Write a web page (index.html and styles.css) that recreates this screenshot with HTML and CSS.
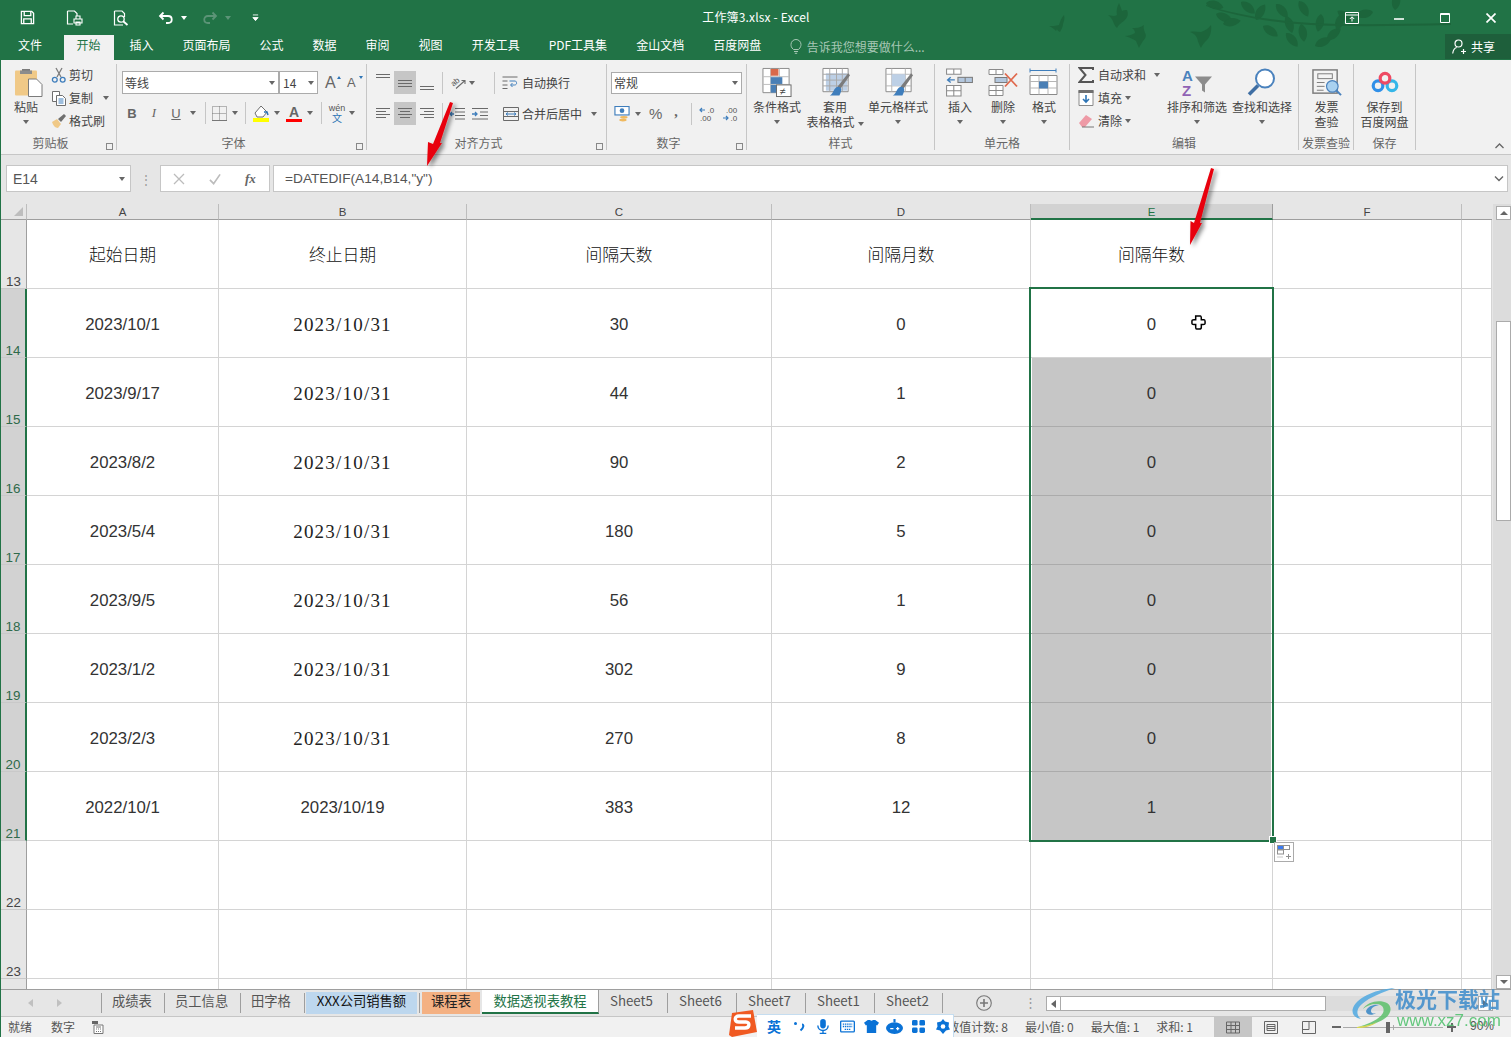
FILE: index.html
```html
<!DOCTYPE html>
<html lang="zh-CN">
<head>
<meta charset="utf-8">
<title>工作簿3.xlsx - Excel</title>
<link rel="stylesheet" href="styles.css">
</head>
<body>
<div class="app">

<header class="titlebar">
  <div class="qat">
    <svg class="qi" viewBox="0 0 16 16"><path d="M1.500 1.500h11l2 2v11h-13z" fill="none" stroke="#fff" stroke-width="1.400"/><path d="M4.500 2v4h7V2M4 14.500V9.500h8v5" fill="none" stroke="#fff" stroke-width="1.400"/></svg>
    <svg class="qi q2" viewBox="0 0 17 16"><path d="M1.500 1h7l2.500 2.500V8M1.500 1v13H7" fill="none" stroke="#fff" stroke-width="1.200"/><path d="M8 9h8v4H8zM10 9V6h4v3M10 12h4v3h-4z" fill="#217346" stroke="#fff" stroke-width="1.100"/></svg>
    <svg class="qi q3" viewBox="0 0 17 16"><path d="M1.500 1h7.500l2.500 2.500V7M1.500 1v14H10" fill="none" stroke="#fff" stroke-width="1.200"/><circle cx="8" cy="9" r="3.200" fill="none" stroke="#fff" stroke-width="1.300"/><path d="M10.500 11.500l4 3.500" stroke="#fff" stroke-width="1.800"/></svg>
    <svg class="qi q4" viewBox="0 0 16 14"><path d="M5.500 1.500L2 5l3.500 3.500" fill="none" stroke="#fff" stroke-width="1.800"/><path d="M2.500 5H10c5 0 5 7 0 7H8" fill="none" stroke="#fff" stroke-width="1.800"/></svg>
    <i class="caret white"></i>
    <svg class="qi q5" viewBox="0 0 16 14"><path d="M10.500 1.500L14 5l-3.500 3.500" fill="none" stroke="#5c9477" stroke-width="1.800"/><path d="M13.500 5H6c-5 0-5 7 0 7h2" fill="none" stroke="#5c9477" stroke-width="1.800"/></svg>
    <i class="caret dim"></i>
    <svg class="qi q6" viewBox="0 0 8 9"><path d="M1 1h6M1 4h6l-3 3.500L1 4" fill="#fff" stroke="#fff" stroke-width="1"/></svg>
  </div>
  <div class="doc-title">工作簿3.xlsx - Excel</div>
  <svg class="leaves" viewBox="0 0 460 60">
    <defs><path id="lf" d="M0 0C4-6 13-6 18 0 13 5 4 5 0 0z"/></defs>
    <g fill="#1c653b">
      <path d="M63 15c-3 3-4 7-5 10-3 1-7 1-10 1 3 1 5 3 7 5l1-2c0 1 1 2 3 3 1-2 3-5 3-8 1-3 2-6 1-9z"/>
      <path d="M118 3c-2 4-3 8-2 12-3 2-7 0-9 0 4 3 5 6 6 9 1 2 2 3 3 4 1-3 4-5 7-7 3-3 5-6 3-11-2 0-4 0-5 1-1-3-2-6-3-8z"/>
      <path d="M143 25c-4 3-8 3-12 3 2 1 3 3 3 5-3 2-7 3-10 3 4 1 8 3 11 5 1 2 2 5 3 7 1-3 3-5 4-7 2-2 4-5 2-8-1-3-2-6-1-8z"/>
      <path d="M210 25c-3 4-7 6-10 7-4 0-7-1-11 0 3 1 6 3 7 6 1 3 2 7 4 10 1-3 3-5 6-8 3-3 5-9 4-15z"/>
      <use href="#lf" transform="translate(205 3) rotate(15)"/>
      <use href="#lf" transform="translate(215 14) rotate(25)"/>
      <use href="#lf" transform="translate(222 24) rotate(-10)"/>
      <use href="#lf" transform="translate(240 2) rotate(40)"/>
      <use href="#lf" transform="translate(255 20) rotate(-60)"/>
      <use href="#lf" transform="translate(275 4) rotate(50)"/>
      <use href="#lf" transform="translate(285 16) rotate(70)"/>
      <use href="#lf" transform="translate(262 26) rotate(35)"/>
      <use href="#lf" transform="translate(300 24) rotate(80)"/>
      <use href="#lf" transform="translate(298 1) rotate(60)"/>
      <use href="#lf" transform="translate(320 14) rotate(100)"/>
      <use href="#lf" transform="translate(314 46) rotate(-25)"/>
      <use href="#lf" transform="translate(326 40) rotate(-40)"/>
      <use href="#lf" transform="translate(336 30) rotate(-70)"/>
      <use href="#lf" transform="translate(352 20) rotate(-150)"/>
      <use href="#lf" transform="translate(372 12) rotate(170)"/>
      <use href="#lf" transform="translate(394 10) rotate(-80)"/>
      <use href="#lf" transform="translate(285 33) rotate(50)"/>
      <path d="M205 5c30 10 70 16 105 18 40 2 90 1 140 0v2c-50 1-100 2-140 0-35-2-75-8-105-19z"/>
    </g>
  </svg>
  <div class="winctl">
    <svg class="w1" viewBox="0 0 14 12"><path d="M.5.500h13v11H.5zM.5 3h13" fill="none" stroke="#fff" stroke-width="1"/><path d="M7 9.500V5M4.800 7L7 4.800 9.200 7" fill="none" stroke="#fff"/></svg>
    <svg class="w2" viewBox="0 0 10 2"><path d="M0 1h10" stroke="#fff" stroke-width="1.600"/></svg>
    <svg class="w3" viewBox="0 0 10 10"><path d="M.5.500h9v9h-9zM.5 1.500h9" fill="none" stroke="#fff" stroke-width="1"/></svg>
    <svg class="w4" viewBox="0 0 10 10"><path d="M.5.500l9 9M9.500.500l-9 9" stroke="#fff" stroke-width="1.700"/></svg>
  </div>
</header>

<nav class="tabsrow">
  <span class="tab first">文件</span>
  <span class="tab on">开始</span>
  <span class="tab">插入</span>
  <span class="tab">页面布局</span>
  <span class="tab">公式</span>
  <span class="tab">数据</span>
  <span class="tab">审阅</span>
  <span class="tab">视图</span>
  <span class="tab">开发工具</span>
  <span class="tab">PDF工具集</span>
  <span class="tab">金山文档</span>
  <span class="tab">百度网盘</span>
  <span class="tell">
    <svg viewBox="0 0 12 15"><path d="M3.500 10.500C1 8.500 1 6.500 1 5.500a5 5 0 0 1 10 0c0 1-.3 3-2.500 5zM4 12.500h4M4.800 14.300h2.400" fill="none" stroke="#a7c7b5" stroke-width="1"/></svg>
    告诉我您想要做什么...
  </span>
  <span class="share">
    <svg viewBox="0 0 14 15"><circle cx="6.500" cy="4.500" r="3.500" fill="none" stroke="#fff" stroke-width="1.200"/><path d="M.7 14.500c.5-3.500 2-5.500 4-6M9 12.500h5M11.500 10v5" fill="none" stroke="#fff" stroke-width="1.200"/></svg>
    共享
  </span>
</nav>

<section class="ribbon">

  <div class="group g-clip">
    <div class="gbody clip-body">
      <div class="bigbtn paste">
        <svg class="ic30" viewBox="0 0 30 30"><rect x="1" y="3" width="22" height="25" rx="1" fill="#f0c987"/><path d="M8 4h8V1.500h-8z" fill="#7b7b7b"/><rect x="6" y="3" width="12" height="3.500" fill="#8c8c8c"/><path d="M14.500 11.500h8l5.500 5.500v12h-13.500z" fill="#fff" stroke="#7b7b7b"/></svg>
        <span class="lb">粘贴</span><i class="caret"></i>
      </div>
      <div class="stack">
        <div class="srow"><svg class="ic16" viewBox="0 0 16 16"><path d="M5 1l5 9M11 1L6 10" stroke="#7d7d7d" stroke-width="1.300" fill="none"/><circle cx="3.800" cy="12.700" r="2.400" fill="none" stroke="#3f7ebc" stroke-width="1.300"/><circle cx="11.700" cy="12.700" r="2.400" fill="none" stroke="#3f7ebc" stroke-width="1.300"/></svg><span>剪切</span></div>
        <div class="srow"><svg class="ic16" viewBox="0 0 16 16"><path d="M1.500 1.500h7v10h-7z" fill="#fff" stroke="#6f6f6f"/><path d="M5.500 5.500h6l3 3v7h-9z" fill="#fff" stroke="#6f6f6f"/><path d="M7.500 9h5M7.500 11h5M7.500 13h5" stroke="#3f7ebc"/></svg><span>复制</span><i class="caret c-copy"></i></div>
        <div class="srow"><svg class="ic16" viewBox="0 0 16 16"><path d="M1 9l5-3 4 5-3 4c-3 0-5-3-6-6z" fill="#f0c987"/><path d="M7 6l6-5 2 2-5 6z" fill="#6f6f6f"/></svg><span>格式刷</span></div>
      </div>
    </div>
    <div class="glabel hasl">剪贴板<i class="launch"></i></div>
  </div>

  <div class="group g-font">
    <div class="gbody col-rows">
      <div class="rrow r-top">
        <div class="combo c-name"><span>等线</span><i class="caret"></i></div>
        <div class="combo c-size"><span>14</span><i class="caret"></i></div>
        <span class="growa">A<i class="up"></i></span>
        <span class="growa small">A<i class="down"></i></span>
      </div>
      <div class="rrow r-fmt">
        <b class="fm fb">B</b><em class="fm fi">I</em><span class="fm fu">U</span><i class="caret"></i>
        <u class="vsep v1"></u>
        <svg class="ic15 bd" viewBox="0 0 15 15"><path d="M.5.500h14v14H.5zM7.500.500v14M.5 7.500h14" fill="none" stroke="#777" stroke-dasharray="1 1"/><path d="M0 14.500h15" stroke="#777"/></svg><i class="caret"></i>
        <u class="vsep v2"></u>
        <svg class="ic17" viewBox="0 0 17 17"><path d="M8 1l6 6-4 5H4L2 8z" fill="#fff" stroke="#6f6f6f"/><path d="M11 7l3 0 1 3" fill="none" stroke="#2e75b6" stroke-width="1.500"/><rect x="0" y="13" width="16" height="4" fill="#ffff00"/></svg><i class="caret"></i>
        <span class="colora">A</span><i class="caret"></i>
        <u class="vsep v3"></u>
        <span class="wen"><small>wén</small><b>文</b></span><i class="caret"></i>
      </div>
    </div>
    <div class="glabel hasl">字体<i class="launch"></i></div>
  </div>

  <div class="group g-align">
    <div class="gbody col-rows">
      <div class="rrow r-al">
        <span class="albtn"><svg viewBox="0 0 14 8"><path d="M0 .5h14M0 3.500h14" stroke="#6a6a6a"/></svg></span>
        <span class="albtn act"><svg viewBox="0 0 14 8"><path d="M0 1.500h14M0 4.500h14M0 7.500h14" stroke="#6a6a6a"/></svg></span>
        <span class="albtn low"><svg viewBox="0 0 14 8"><path d="M0 3.500h14M0 6.500h14" stroke="#6a6a6a"/></svg></span>
        <u class="vsep a1"></u>
        <svg class="ic17 orient" viewBox="0 0 17 15"><text x="1" y="9" class="ortx" transform="rotate(-40 6 7)">ab</text><path d="M6 13.500L15 5.500M11.500 5.500H15V9" fill="none" stroke="#6a6a6a" stroke-width="1.100"/></svg><i class="caret"></i>
        <u class="vsep a2"></u>
        <svg class="ic16" viewBox="0 0 16 14"><path d="M.5 1h15M.5 12.500h5M.5 5h5M.5 9h5" stroke="#6a6a6a" fill="none"/><path d="M7.500 5h6c2 2 1 4-1 4H9M10.500 7l-2 2 2 2" stroke="#3f7ebc" fill="none"/></svg>
        <span class="tx wrap">自动换行</span>
      </div>
      <div class="rrow r-al">
        <span class="albtn"><svg viewBox="0 0 14 11"><path d="M0 .5h14M0 3.500h10M0 6.500h14M0 9.500h10" stroke="#6a6a6a"/></svg></span>
        <span class="albtn act"><svg viewBox="0 0 14 11"><path d="M0 .5h14M2 3.500h10M0 6.500h14M2 9.500h10" stroke="#6a6a6a"/></svg></span>
        <span class="albtn"><svg viewBox="0 0 14 11"><path d="M0 .5h14M4 3.500h10M0 6.500h14M4 9.500h10" stroke="#6a6a6a"/></svg></span>
        <u class="vsep a1"></u>
        <svg class="ic16 ind1" viewBox="0 0 16 12"><path d="M6 .5h10M6 4h10M6 7.500h10M6 11h10" stroke="#6a6a6a"/><path d="M5 6H1M3 4L1 6l2 2" stroke="#3f7ebc" fill="none" stroke-width="1.300"/></svg>
        <svg class="ic16 ind2" viewBox="0 0 16 12"><path d="M0 .5h16M8 4h8M8 7.500h8M0 11h16" stroke="#6a6a6a"/><path d="M0 6h5M3 4l2 2-2 2" stroke="#3f7ebc" fill="none" stroke-width="1.300"/></svg>
        <u class="vsep a3"></u>
        <svg class="ic16" viewBox="0 0 16 14"><path d="M.5.500h15v13H.5zM.5 4.500h15M.5 9.500h15" fill="none" stroke="#6a6a6a"/><path d="M3 7h10M5 5.500L3 7l2 1.500M11 5.500L13 7l-2 1.500" stroke="#3f7ebc" fill="#f1f1f1"/></svg>
        <span class="tx">合并后居中</span><i class="caret c-merge"></i>
      </div>
    </div>
    <div class="glabel hasl">对齐方式<i class="launch"></i></div>
  </div>

  <div class="group g-num">
    <div class="gbody col-rows">
      <div class="rrow r-top"><div class="combo c-fmt"><span>常规</span><i class="caret"></i></div></div>
      <div class="rrow r-n">
        <svg class="ic16" viewBox="0 0 16 17"><rect x=".5" y=".5" width="15" height="9" fill="#fff" stroke="#3f7ebc" stroke-width="1.200"/><circle cx="8" cy="5" r="2.500" fill="#3f7ebc"/><ellipse cx="10" cy="12" rx="4" ry="1.500" fill="#f0b95f"/><ellipse cx="9" cy="15" rx="4" ry="1.500" fill="#f0b95f"/></svg><i class="caret c-mon"></i>
        <span class="pct">%</span><span class="comma">,</span>
        <u class="vsep n1"></u>
        <span class="dec"><svg viewBox="0 0 16 16"><path d="M6 4H1M3 2L1 4l2 2" stroke="#3f7ebc" fill="none" stroke-width="1.200"/><text x="8.500" y="7" class="dectx">.0</text><text x="1" y="15" class="dectx">.00</text></svg></span>
        <span class="dec d2"><svg viewBox="0 0 16 16"><text x="4" y="7" class="dectx">.00</text><path d="M1 12h5M4 10l2 2-2 2" stroke="#3f7ebc" fill="none" stroke-width="1.200"/><text x="8.500" y="15" class="dectx">.0</text></svg></span>
      </div>
    </div>
    <div class="glabel hasl">数字<i class="launch"></i></div>
  </div>

  <div class="group g-style">
    <div class="gbody bigs">
      <div class="bigbtn b-cond">
        <svg class="ic30" viewBox="0 0 31 31"><path d="M1 1h27v25H1z" fill="#fff" stroke="#8a8a8a"/><path d="M1 9.500h27M1 17.500h27M9 1v25M18 1v25" stroke="#bdbdbd"/><rect x="9" y="1.500" width="8" height="7" fill="#d9694a"/><rect x="9" y="10" width="12" height="7" fill="#4a7fb5"/><rect x="9" y="18" width="6" height="8" fill="#4a7fb5"/><rect x="15" y="18" width="15" height="12" fill="#fff" stroke="#6a6a6a"/><text x="18.500" y="28" class="neq">≠</text></svg>
        <span class="lb">条件格式</span><i class="caret"></i>
      </div>
      <div class="bigbtn b-table">
        <svg class="ic30" viewBox="0 0 31 31"><path d="M1 1h26v24H1z" fill="#fff" stroke="#8a8a8a"/><path d="M4 6h22v18H4z" fill="#bdd0e6"/><path d="M1 7h26M1 13h26M1 19h26M8 1v24M15 1v24M21 1v24" stroke="#a9a9a9"/><path d="M29 8L19 22l-3-2L27 6z" fill="#7b7b7b"/><path d="M12 24c2-4 5-5 7-3 2 2 0 6-1 8H8c2-1 3-3 4-5z" fill="#3f7ebc"/></svg>
        <span class="lb">套用</span><span class="lb lb2">表格格式<i class="caret inl"></i></span>
      </div>
      <div class="bigbtn b-cellst">
        <svg class="ic30" viewBox="0 0 31 31"><path d="M1 1h26v24H1z" fill="#fff" stroke="#8a8a8a"/><path d="M1 7h26M1 19h26M7 1v24M21 1v24" stroke="#b5b5b5"/><rect x="7" y="7" width="14" height="12" fill="#bdd0e6"/><path d="M29 8L19 22l-3-2L27 6z" fill="#7b7b7b"/><path d="M12 24c2-4 5-5 7-3 2 2 0 6-1 8H8c2-1 3-3 4-5z" fill="#3f7ebc"/></svg>
        <span class="lb">单元格样式</span><i class="caret"></i>
      </div>
    </div>
    <div class="glabel">样式</div>
  </div>

  <div class="group g-cells">
    <div class="gbody bigs">
      <div class="bigbtn b-ins">
        <svg class="ic30" viewBox="0 0 28 30"><path d="M1 2h14v5H1zM8 2v5M1 18h14v10H1zM8 18v10M1 23h14" fill="#fff" stroke="#8a8a8a"/><rect x="12" y="10" width="14" height="5" fill="#b3c7de" stroke="#7b7b7b"/><path d="M19 10v5" stroke="#7b7b7b"/><path d="M9 12.500H2M5 10l-3 2.500L5 15" fill="none" stroke="#3f7ebc" stroke-width="1.300"/></svg>
        <span class="lb">插入</span><i class="caret"></i>
      </div>
      <div class="bigbtn b-del">
        <svg class="ic30" viewBox="0 0 30 30"><path d="M1 2h14v5H1zM8 2v5M1 18h14v10H1zM8 18v10M1 23h14" fill="#fff" stroke="#8a8a8a"/><rect x="7" y="10" width="12" height="5" fill="#b3c7de" stroke="#7b7b7b"/><path d="M17 6l12 13M29 6L17 19" stroke="#e0694d" stroke-width="1.800"/></svg>
        <span class="lb">删除</span><i class="caret"></i>
      </div>
      <div class="bigbtn b-fmt">
        <svg class="ic30" viewBox="0 0 30 30"><path d="M1 3h26M1 1v4M27 1v4" stroke="#3f7ebc" fill="none"/><path d="M1 8h27v19H1z" fill="#fff" stroke="#8a8a8a"/><path d="M1 14h27M1 20.500h27M10 8v19M19 8v19" stroke="#b5b5b5"/><rect x="10" y="14" width="9" height="7" fill="#4a7fb5"/></svg>
        <span class="lb">格式</span><i class="caret"></i>
      </div>
    </div>
    <div class="glabel">单元格</div>
  </div>

  <div class="group g-edit">
    <div class="gbody bigs">
      <div class="stack estack">
        <div class="srow"><svg class="ic16" viewBox="0 0 16 16"><path d="M15 3V1H1.500l6 7-6 7H15v-2" fill="none" stroke="#555" stroke-width="2"/></svg><span>自动求和</span><i class="caret c-sum"></i></div>
        <div class="srow"><svg class="ic16" viewBox="0 0 15 16"><path d="M.5 .5h14v15H.5z" fill="#fff" stroke="#8a8a8a"/><rect x="0" y="0" width="15" height="3" fill="#6f6f6f"/><path d="M7.500 5v7M4.500 9l3 3 3-3" fill="none" stroke="#2e75b6" stroke-width="1.600"/></svg><span>填充</span><i class="caret"></i></div>
        <div class="srow"><svg class="ic16" viewBox="0 0 16 16"><path d="M1 10l7-8 6 4-7 8H4z" fill="#ee9aa6"/><path d="M4 14h12" stroke="#777"/></svg><span>清除</span><i class="caret"></i></div>
      </div>
      <div class="bigbtn b-sort">
        <svg class="ic30" viewBox="0 0 30 30"><text x="0" y="13" class="az a">A</text><text x="0" y="28" class="az z">Z</text><path d="M13 9h17l-7 8v8l-3-2v-6z" fill="#8c8c8c"/></svg>
        <span class="lb">排序和筛选</span><i class="caret"></i>
      </div>
      <div class="bigbtn b-find">
        <svg class="ic30" viewBox="0 0 30 30"><circle cx="18" cy="11" r="9" fill="#fff" stroke="#4a82bd" stroke-width="2"/><path d="M11 18L2 27" stroke="#3f6ea3" stroke-width="3.500"/></svg>
        <span class="lb">查找和选择</span><i class="caret"></i>
      </div>
    </div>
    <div class="glabel">编辑</div>
  </div>

  <div class="group g-inv">
    <div class="gbody bigs">
      <div class="bigbtn b-inv">
        <svg class="ic30" viewBox="0 0 31 28"><rect x="1" y="1" width="25" height="24" fill="#f3f3f3" stroke="#7b7b7b" stroke-width="1.500"/><rect x="6" y="5" width="15" height="5" fill="none" stroke="#7b7b7b"/><path d="M5 14h8M5 18h8M5 22h7" stroke="#7b7b7b"/><circle cx="21" cy="18" r="6" fill="#a9d1f0" stroke="#4a82bd" stroke-width="1.200"/><path d="M25 22l5 5" stroke="#4a82bd" stroke-width="2"/></svg>
        <span class="lb">发票</span><span class="lb lb2">查验</span>
      </div>
    </div>
    <div class="glabel">发票查验</div>
  </div>

  <div class="group g-save">
    <div class="gbody bigs">
      <div class="bigbtn b-save">
        <svg class="ic30" viewBox="0 0 28 24"><circle cx="7.500" cy="15" r="4.500" fill="none" stroke="#2f8fe8" stroke-width="3"/><circle cx="20.500" cy="15" r="4.500" fill="none" stroke="#35b6e8" stroke-width="3"/><circle cx="14" cy="8" r="4.500" fill="none" stroke="#ee4a63" stroke-width="3"/></svg>
        <span class="lb">保存到</span><span class="lb lb2">百度网盘</span>
      </div>
    </div>
    <div class="glabel">保存</div>
  </div>

  <div class="ribbon-end"><svg viewBox="0 0 9 6"><path d="M.5 5L4.500 1l4 4" fill="none" stroke="#666" stroke-width="1.300"/></svg></div>
</section>

<section class="formula">
  <div class="namebox"><span>E14</span><i class="caret"></i></div>
  <span class="fdots">⋮</span>
  <div class="fbtns">
    <svg viewBox="0 0 12 12"><path d="M1 1l10 10M11 1L1 11" stroke="#bcbcbc" stroke-width="1.300"/></svg>
    <svg viewBox="0 0 13 12"><path d="M1 7l4 4 7-10" fill="none" stroke="#bcbcbc" stroke-width="1.800"/></svg>
    <em>fx</em>
  </div>
  <div class="fin"><span>=DATEDIF(A14,B14,"y")</span><svg viewBox="0 0 10 7"><path d="M1 1.500l4 4 4-4" fill="none" stroke="#666" stroke-width="1.400"/></svg></div>
</section>

<section class="sheetwrap">
  <div class="sheet">
    <div class="hd corner"><i></i></div>
    <div class="hd">A</div><div class="hd">B</div><div class="hd">C</div><div class="hd">D</div><div class="hd sel">E</div><div class="hd">F</div><div class="hd none"></div>

    <div class="rh r1"><span>13</span></div>
    <div class="c t">起始日期</div><div class="c t">终止日期</div><div class="c t">间隔天数</div><div class="c t">间隔月数</div><div class="c t">间隔年数</div><div class="c"></div><div class="c"></div>

    <div class="rh on"><span>14</span></div>
    <div class="c">2023/10/1</div><div class="c w">2023/10/31</div><div class="c">30</div><div class="c">0</div><div class="c">0</div><div class="c"></div><div class="c"></div>

    <div class="rh on"><span>15</span></div>
    <div class="c">2023/9/17</div><div class="c w">2023/10/31</div><div class="c">44</div><div class="c">1</div><div class="c g">0</div><div class="c"></div><div class="c"></div>

    <div class="rh on"><span>16</span></div>
    <div class="c">2023/8/2</div><div class="c w">2023/10/31</div><div class="c">90</div><div class="c">2</div><div class="c g">0</div><div class="c"></div><div class="c"></div>

    <div class="rh on"><span>17</span></div>
    <div class="c">2023/5/4</div><div class="c w">2023/10/31</div><div class="c">180</div><div class="c">5</div><div class="c g">0</div><div class="c"></div><div class="c"></div>

    <div class="rh on"><span>18</span></div>
    <div class="c">2023/9/5</div><div class="c w">2023/10/31</div><div class="c">56</div><div class="c">1</div><div class="c g">0</div><div class="c"></div><div class="c"></div>

    <div class="rh on"><span>19</span></div>
    <div class="c">2023/1/2</div><div class="c w">2023/10/31</div><div class="c">302</div><div class="c">9</div><div class="c g">0</div><div class="c"></div><div class="c"></div>

    <div class="rh on"><span>20</span></div>
    <div class="c">2023/2/3</div><div class="c w">2023/10/31</div><div class="c">270</div><div class="c">8</div><div class="c g">0</div><div class="c"></div><div class="c"></div>

    <div class="rh on"><span>21</span></div>
    <div class="c">2022/10/1</div><div class="c">2023/10/19</div><div class="c">383</div><div class="c">12</div><div class="c g">1</div><div class="c"></div><div class="c"></div>

    <div class="rh"><span>22</span></div>
    <div class="c"></div><div class="c"></div><div class="c"></div><div class="c"></div><div class="c"></div><div class="c"></div><div class="c"></div>

    <div class="rh"><span>23</span></div>
    <div class="c"></div><div class="c"></div><div class="c"></div><div class="c"></div><div class="c"></div><div class="c"></div><div class="c"></div>

    <div class="rh last"></div>
    <div class="c last"></div><div class="c last"></div><div class="c last"></div><div class="c last"></div><div class="c last"></div><div class="c last"></div><div class="c last"></div>
  </div>
  <div class="vscroll">
    <span class="sbtn"><i class="tri tu"></i></span>
    <div class="vtrack"><div class="vthumb"></div></div>
    <span class="sbtn"><i class="tri td"></i></span>
  </div>
  <div class="selection"><i class="handle"></i></div>
  <svg class="cursor" viewBox="0 0 16 16"><path d="M5 1h5c1 0 1 1 1 3v1h3c1 0 1 1 1 2v2c0 1-1 1-2 1h-2v3c0 2-1 2-2 2H6c-1 0-1-1-1-2v-3H3c-1 0-2 0-2-1V6c0-1 1-1 2-1h2V2c0-1 0-1 0-1z" fill="#fff" stroke="#000" stroke-width="1.600"/></svg>
  <div class="autofill"><svg viewBox="0 0 14 14"><rect x=".5" y=".5" width="6" height="4" fill="#3b7bf0" stroke="#8f8f8f"/><rect x="6.500" y=".5" width="6" height="4" fill="#fff" stroke="#8f8f8f"/><rect x=".5" y="5" width="6" height="4" fill="#fff" stroke="#8f8f8f"/><path d="M.5 12h6" stroke="#8f8f8f" stroke-dasharray="1 1"/><path d="M9 11.500h5M11.500 9v5" stroke="#8f8f8f"/></svg></div>
</section>

<section class="sheettabs">
  <div class="navs"><i class="tri lf"></i><i class="tri rg"></i></div>
  <span class="st s-a">成绩表</span>
  <span class="st s-b">员工信息</span>
  <span class="st s-c">田字格</span>
  <span class="st blue">XXX公司销售额</span>
  <u class="tsep"></u>
  <span class="st orange">课程表</span>
  <span class="st act">数据透视表教程</span>
  <span class="st sn first-n">Sheet5</span>
  <span class="st sn">Sheet6</span>
  <span class="st sn">Sheet7</span>
  <span class="st sn">Sheet1</span>
  <span class="st sn last-n">Sheet2</span>
  <svg class="addsheet" viewBox="0 0 16 16"><circle cx="8" cy="8" r="7.300" fill="none" stroke="#777" stroke-width="1.100"/><path d="M8 4v8M4 8h8" stroke="#777" stroke-width="1.600"/></svg>
  <span class="tdots">⋮</span>
  <div class="hscroll">
    <span class="sbtn h"><i class="tri lf dk"></i></span>
    <div class="hthumb"></div>
    <div class="htrack"></div>
    <span class="sbtn h"><i class="tri rg dk"></i></span>
  </div>
</section>

<footer class="status">
  <span class="s1 up1">就绪</span><span class="s2 up1">数字</span>
  <svg class="s3" viewBox="0 0 12 13"><path d="M0 0h6v3H0z" fill="#666"/><path d="M2 4h9v8.500H2z" fill="#fff" stroke="#777"/><path d="M4 6h5M4 8h1M6 8h1M8 8h1M4 10.500h1M6 10.500h1M8 10.500h1" stroke="#777"/></svg>
  <span class="st-stat sc up1">数值计数: 8</span><span class="st-stat up1">最小值: 0</span><span class="st-stat up1">最大值: 1</span><span class="st-stat up1">求和: 1</span>
  <span class="vw on"><svg viewBox="0 0 14 12"><path d="M.5.500h13v11H.5zM.5 4h13M.5 8h13M5 .5v11M9.500.5v11" fill="none" stroke="#666"/></svg></span>
  <span class="vw"><svg viewBox="0 0 14 13"><path d="M.5.500h13v12H.5zM3 3.500h8v6H3zM3 5.500h8M3 7.500h8" fill="none" stroke="#666"/></svg></span>
  <span class="vw"><svg viewBox="0 0 14 13"><path d="M.5.500h13v12H.5zM.5 8.500h6.500V.5" fill="none" stroke="#666"/></svg></span>
  <span class="zm minus"></span>
  <div class="slider"><i></i><b></b></div>
  <span class="zm plus"></span>
  <span class="pctz up1">90%</span>
</footer>

<div class="ime">
  <svg class="ime-s" viewBox="0 0 29 27"><path d="M4 3l21-3 4 22-25 5-3-2z" fill="#f05a22"/><path d="M23 6H11C6 6 6 12 11 12h7c4 0 4 6-1 6H7" fill="none" stroke="#fff" stroke-width="3.400"/></svg>
  <div class="ime-bar">
    <b>英</b>
    <svg class="m1" viewBox="0 0 12 12"><circle cx="2.500" cy="3" r="1.500" fill="#0a72d6"/><path d="M9 4c2 0 2 3-1.500 6" fill="none" stroke="#0a72d6" stroke-width="2"/></svg>
    <svg class="m2" viewBox="0 0 14 16"><rect x="4" y="0" width="6" height="10" rx="3" fill="#0a72d6"/><path d="M1.500 7c0 7 11 7 11 0M7 12v3M3.500 15.500h7" fill="none" stroke="#0a72d6" stroke-width="1.500"/></svg>
    <svg class="m3" viewBox="0 0 16 13"><rect x=".7" y=".7" width="14.600" height="11.600" rx="1" fill="none" stroke="#0a72d6" stroke-width="1.400"/><path d="M3 4h10M3 6.500h10M5 9.500h6" stroke="#0a72d6" stroke-width="1.400" stroke-dasharray="1.500 .8"/></svg>
    <svg class="m4" viewBox="0 0 16 14"><path d="M4 0h2.500c.5 1 2.500 1 3 0H12l4 3-2 3-1-.5V14H3V5.500L2 6 0 3z" fill="#0a72d6"/></svg>
    <svg class="m5" viewBox="0 0 16 14"><ellipse cx="8" cy="8.500" rx="8" ry="5.500" fill="#0a72d6"/><path d="M8 3V0" stroke="#0a72d6" stroke-width="2"/><path d="M4 9h3M9.500 9h3M11 7.500v3" stroke="#fff" stroke-width="1.200"/></svg>
    <svg class="m6" viewBox="0 0 14 14"><rect x="0" y="0" width="6" height="6" rx="1.500" fill="#0a72d6"/><rect x="8" y="0" width="6" height="6" rx="1.500" fill="#0a72d6"/><rect x="0" y="8" width="6" height="6" rx="1.500" fill="#0a72d6"/><rect x="8" y="8" width="6" height="6" rx="1.500" fill="#0a72d6"/></svg>
    <svg class="m7" viewBox="0 0 14 15"><path d="M7 0l2 2.500 4 1-.5 4 1.500 3-4 1-3 3.500-3-3.500-4-1 1.500-3L1 3.500l4-1z" fill="#0a72d6"/><circle cx="7" cy="7.500" r="2.300" fill="#fff"/></svg>
  </div>
</div>

<div class="wm">
  <svg class="wm-swirl" viewBox="0 0 44 40"><path d="M43 0C26 1 6 8 1 20c-2 6 2 10 8 11C4 27 4 21 10 16 18 9 31 4 43 0z" fill="#4fa8e0" opacity=".85"/><path d="M11 21c4-7 16-10 24-6 6 4 4 12-3 16-6 4-15 7-26 8 10-3 21-7 25-14 2-5-1-9-7-9-5 0-10 2-13 5z" fill="#5cc06a" opacity=".85"/><path d="M5 39c7-1 14-2 20-5-5 4-12 6-20 6z" fill="#d9d64e"/><path d="M14 23c2-5 8-7 13-6-5 1-8 3-8 6 0 2 2 3 5 2-4 3-10 2-10-2z" fill="#4f93c9"/></svg>
  <span class="wm-t">极光下载站</span>
  <span class="wm-u">www.xz7.com</span>
</div>

<svg class="arrow a-one" viewBox="0 0 40 70"><defs><filter id="sh" x="-50%" y="-20%" width="200%" height="140%"><feDropShadow dx="3" dy="2" stdDeviation="2" flood-color="#000" flood-opacity=".45"/></filter></defs><path d="M30 2l3 1-13 40h2L7 66 8 42l5 2z" fill="#e8000b" filter="url(#sh)"/></svg>
<svg class="arrow a-two" viewBox="0 0 40 90"><path d="M31 8l3 1-14 54h2L10 85l.5-24 3.500 2z" fill="#e8000b" filter="url(#sh)"/></svg>
</div>
</body>
</html>
```
FILE: styles.css
```css
*{box-sizing:border-box}
html,body{margin:0;padding:0;height:100%;overflow:hidden}
body{font-family:"Noto Sans CJK SC","Liberation Sans",sans-serif;font-size:12px;color:#444;background:#f1f1f1}
.app{position:relative;width:1511px;height:1037px;display:flex;flex-direction:column;border-left:1px solid #217346;overflow:hidden}
i,u{display:block;font-style:normal;text-decoration:none}
svg{display:block;flex:none}

.caret{width:0;height:0;border:3.500px solid transparent;border-top:4px solid #666;border-bottom:0;flex:none}
.caret.white{border-top-color:#fff;margin-left:7px}
.caret.dim{border-top-color:#5c9477;margin-left:7px}
.caret.inl{display:inline-block;vertical-align:middle;margin-left:3px}

/* title */
.titlebar{height:35px;background:#217346;display:flex;align-items:center;position:relative;flex:none}
.qat{display:flex;align-items:center;padding-left:19px}
.qi{width:15px;height:15px}
.q2{width:17px;height:16px;margin-left:31px}
.q3{width:17px;height:16px;margin-left:30px}
.q4{width:16px;height:14px;margin-left:28px}
.q5{width:16px;height:14px;margin-left:15px}
.q6{width:7px;height:8px;margin-left:21px}
.doc-title{position:absolute;left:0;right:0;top:8px;text-align:center;color:#fff;font-size:12px;line-height:17px;letter-spacing:.15px}
.leaves{position:absolute;left:1000px;top:0;width:460px;height:60px;z-index:1}
.winctl{margin-left:auto;display:flex;align-items:center;position:relative;z-index:2;padding-right:15px}
.w1{width:14px;height:12px;margin-right:35px}
.w2{width:10px;height:2px;margin-right:36px;margin-top:2px}
.w3{width:10px;height:10px;margin-right:36px}
.w4{width:10px;height:10px}

.tabsrow{height:25px;background:#217346;display:flex;align-items:stretch;color:#fff;font-size:12px;position:relative;flex:none}
.tab{padding:0 14.500px;line-height:20px;white-space:nowrap;position:relative;z-index:2}
.tab.first{margin-left:2.500px;margin-right:7px}
.tab.on{background:#f1f1f1;color:#217346;padding:0 13px;margin-right:1.500px;line-height:20px}
.tell{display:flex;align-items:center;color:#a7c7b5;height:22px;margin-left:14px;gap:5px;position:relative;z-index:2}
.tell svg{width:12px;height:15px}
.share{margin-left:auto;width:66px;height:25px;margin-top:-1px;background:#1e5f3b;display:flex;align-items:center;padding-left:7px;gap:5px;position:relative;z-index:2}
.share svg{width:14px;height:15px}

/* ribbon */
.ribbon{height:95px;background:#f1f1f1;border-bottom:1px solid #c6c6c6;display:flex;padding-top:4px;flex:none;color:#444}
.group{display:flex;flex-direction:column;border-right:1px solid #c6c6c6;height:86px;position:relative;flex:none}
.gbody{height:70px;display:flex}
.glabel{height:16px;line-height:18px;text-align:center;color:#666;font-size:12px;position:relative;white-space:nowrap}
.glabel.hasl{padding-right:16px}
.launch{position:absolute;right:3px;top:9px;width:7px;height:7px;border-left:1px solid #888;border-top:1px solid #888;box-shadow:inset -2px -2px 0 -1px #888}
.g-clip{width:116px}
.g-font{width:250px}
.g-align{width:240px}
.g-num{width:140px}
.g-style{width:188px}
.g-cells{width:135px}
.g-edit{width:229px}
.g-inv{width:55px}
.g-save{width:62px}
.ribbon-end{flex:1;position:relative}
.ribbon-end svg{position:absolute;right:7px;top:79px;width:9px;height:6px}

.ic30{width:30px;height:31px}
.ic16{width:16px;height:16px}
.ic15{width:15px;height:15px}
.ic17{width:17px;height:17px}

.bigbtn{display:flex;flex-direction:column;align-items:center;flex:none}
.bigbtn .lb{line-height:15px;white-space:nowrap}
.bigbtn svg+.lb{margin-top:1px}
.bigbtn>.caret{margin-top:6px}
.clip-body{padding:3px 0 0 10px}
.paste{width:30px}
.paste svg{align-self:flex-start;margin-left:3px}
.stack{display:flex;flex-direction:column;margin:-4px 0 0 10px;flex:none}
.srow{height:23px;display:flex;align-items:center;gap:2px;white-space:nowrap;color:#444}
.c-copy{margin-left:7.500px}
.estack{margin-left:8px;width:87px}
.estack .srow{gap:4px}
.estack .srow .caret{margin-left:-1px}
.estack .srow .c-sum{margin-left:4px}

.bigs{padding-top:3px}
.b-cond{width:60px}
.b-table{width:58px;margin-left:-1px}
.b-table svg{margin-left:4px}
.b-cellst{width:64px;margin-left:2px}
.b-cellst svg{margin-left:3px}
.g-cells .bigs{padding-left:9px}
.b-ins{width:32px}
.b-del{width:32px;margin-left:11px}
.b-fmt{width:32px;margin-left:9px}
.b-sort{width:64px}
.b-find{width:64px;margin-left:1px}
.b-inv{width:55px}
.b-save{width:61px}

.col-rows{flex-direction:column}
.rrow{display:flex;align-items:center;position:relative}
.r-top{height:23px;margin-top:7px;padding-left:5px}
.g-num .r-top{padding-left:4px}
.combo{height:23px;border:1px solid #ababab;background:#fff;display:flex;align-items:center;padding:0 3px 0 2px;color:#444;justify-content:space-between}
.c-name{width:157px}
.c-size{width:39px;padding-left:3px}
.c-fmt{width:131px;height:22px;padding-left:2px}
.growa{font-size:16px;line-height:20px;color:#666;position:relative;margin-left:7px;width:13px;font-family:"Liberation Sans",sans-serif}
.growa.small{font-size:13px;margin-left:9px}
.up,.down{position:absolute;right:-3px;top:3px;border:2.500px solid transparent}
.up{border-bottom:3px solid #2e75b6;border-top:0}
.down{border-top:3px solid #2e75b6;border-bottom:0}
.r-fmt{height:24px;margin-top:7px;padding-left:10px}
.fm{font-family:"Liberation Sans",sans-serif;font-size:13px;color:#666;width:10px;text-align:center}
.fi{font-family:"Liberation Serif",serif;margin-left:12px}
.fu{margin-left:12px;text-decoration:underline}
.fu+.caret{margin-left:8.500px}
.vsep{width:1px;height:22px;background:#c6c6c6;flex:none}
.v1{margin-left:9.500px}
.bd{margin-left:6px}
.bd+.caret{margin-left:4.500px}
.v2{margin-left:7.500px}
.v2+svg{margin-left:7px}
.v2+svg+.caret{margin-left:3.500px}
.colora{font:700 14px "Liberation Sans",sans-serif;color:#666;border-bottom:3px solid #f00;width:16px;text-align:center;line-height:14px;margin-left:6.500px}
.colora+.caret{margin-left:4.500px}
.v3{margin-left:8px}
.wen{display:flex;flex-direction:column;align-items:center;margin-left:8px;width:15px;line-height:10px}
.wen small{font-size:9px;color:#555;font-family:"Liberation Sans",sans-serif}
.wen b{font-size:10px;color:#2e75b6;font-weight:400}
.wen+.caret{margin-left:4.500px}

.r-al{height:23px;padding-left:5px}
.r-al:first-child{margin-top:7px}
.r-al+.r-al{margin-top:8px}
.albtn{width:22px;height:23px;display:flex;align-items:center;justify-content:center}
.albtn svg{width:14px;height:11px}
.albtn.act{background:#c6c6c6}
.r-al:first-child .albtn svg{height:8px;width:14px}
.r-al:first-child .albtn:first-child{align-items:flex-start;padding-top:3px}
.r-al:first-child .albtn.low{align-items:flex-end;padding-bottom:3px}
.a1{margin-left:4px}
.orient{margin-left:7px}
.orient+.caret{margin-left:2px}
.ortx{font:400 8px "Liberation Sans",sans-serif;fill:#555}
.a2{margin-left:19px}
.a2+svg{margin-left:7px}
.tx{margin-left:3px;white-space:nowrap}
.tx.wrap{margin-left:4px}
.ind1{margin-left:6px}
.ind2{margin-left:7px}
.a3{margin-left:7px;background:transparent}
.a3+svg{margin-left:7px}
.c-merge{margin-left:9px}

.r-n{height:23px;margin-top:8px;padding-left:7px}
.c-mon{margin-left:4.500px}
.pct{font:400 15px "Liberation Sans",sans-serif;color:#666;margin-left:8.500px}
.comma{font:700 14px "Liberation Serif",serif;color:#666;margin-left:12px;margin-top:-4px}
.n1{margin-left:13px}
.dec{width:16px;height:16px;margin-left:7.500px}
.dec.d2{margin-left:7px}
.dec svg{width:16px;height:16px}
.dectx{font:400 8px "Liberation Sans",sans-serif;fill:#555}
.neq{font:400 11px "Liberation Sans",sans-serif;fill:#444}
.az{font:700 15px "Liberation Sans",sans-serif}
.az.a{fill:#4a82bd}
.az.z{fill:#9063b5}

/* formula */
.formula{height:49px;background:#e6e6e6;display:flex;align-items:flex-start;padding:10px 3px 0 5px;flex:none}
.namebox{width:125px;height:27px;background:#fff;border:1px solid #c6c6c6;display:flex;align-items:center;justify-content:space-between;padding:0 5px 0 6px;font-family:"Liberation Sans",sans-serif;font-size:14px;color:#555;flex:none}
.fdots{width:29px;text-align:center;line-height:27px;color:#999;font-size:12px;flex:none}
.fbtns{width:110px;height:27px;background:#fff;border:1px solid #c6c6c6;display:flex;align-items:center;padding-left:12px;gap:24px;flex:none}
.fbtns svg{width:12px;height:12px}
.fbtns em{font:italic 700 13px "Liberation Serif",serif;color:#666}
.fin{flex:1;height:27px;margin-left:3px;background:#fff;border:1px solid #c6c6c6;display:flex;align-items:center;justify-content:space-between;padding:0 3px 0 11px;font-family:"Liberation Sans",sans-serif;font-size:13.700px;color:#555}
.fin svg{width:10px;height:7px}

/* sheet */
.sheetwrap{display:flex;height:785px;background:#e6e6e6;position:relative;flex:none}
.sheet{display:grid;width:1492px;margin-left:-1px;grid-template-columns:27px 192px 248px 305px 259px 242px 189px 30px;grid-template-rows:16px repeat(11,69px) 11px;background:#fff;flex:none;overflow:hidden}
.hd{background:#e6e6e6;border-bottom:1px solid #9e9e9e;border-right:1px solid #bdbdbd;text-align:center;font:400 11.500px/16px "Liberation Sans",sans-serif;color:#444;overflow:hidden;height:16px;position:relative}
.hd.none{border-right:0}
.hd.sel{background:#d2d2d2;border-bottom:2px solid #217346;color:#217346;border-right-color:#9e9e9e}
.corner i{position:absolute;right:3px;bottom:3px;width:0;height:0;border-left:9px solid transparent;border-bottom:9px solid #bdbdbd}
.rh{background:#e6e6e6;border-bottom:1px solid #c9c9c9;border-right:1px solid #9e9e9e;display:flex;align-items:flex-end;justify-content:center;padding-left:1px;font:400 13.400px/13px "Liberation Sans",sans-serif;color:#444}
.rh.on{background:#d2d2d2;border-right:2px solid #217346;color:#2f6a4a}
.c{border-right:1px solid #d4d4d4;border-bottom:1px solid #d4d4d4;display:flex;align-items:center;justify-content:center;padding-top:4px;font:400 16.800px "Liberation Sans","Noto Sans CJK SC",sans-serif;color:#333;background:#fff}
.c.t{font-family:"Noto Sans CJK SC",sans-serif;font-weight:300;padding-top:0;color:#111}
.c.w{font-family:"Liberation Serif",serif;font-size:19px;letter-spacing:1.200px;color:#222}
.c.g{background:#c6c6c6;border-right-color:#c6c6c6;border-bottom-color:#ababab;box-shadow:inset 1px 0 0 #fff,inset -1px 0 0 #fff}
.rh.last,.c.last{border-bottom:0}
.vscroll{width:18px;display:flex;flex-direction:column;align-items:center;background:#dcdcdc;padding-top:2px;padding-left:3px;margin-left:1px;height:785px;flex:none}
.sbtn{width:15px;height:14px;background:#fff;border:1px solid #ababab;display:flex;align-items:center;justify-content:center;flex:none}
.vtrack{flex:1;width:15px;display:flex;flex-direction:column}
.vthumb{width:15px;height:200px;margin-top:101px;background:#fff;border:1px solid #ababab}
.tri{width:0;height:0;border:4px solid transparent;display:block}
.tri.tu{border-bottom:4px solid #666;border-top:0}
.tri.td{border-top:4px solid #666;border-bottom:0}
.tri.lf{border-right:5px solid #c0c0c0;border-left:0}
.tri.rg{border-left:5px solid #c0c0c0;border-right:0}
.tri.dk.lf{border-right-color:#666}
.tri.dk.rg{border-left-color:#666}

.selection{position:absolute;left:1028px;top:83px;width:245px;height:555px;border:2px solid #217346;pointer-events:none}
.handle{position:absolute;right:-3.500px;bottom:-3px;width:6px;height:6px;background:#217346;outline:1px solid #fff}
.cursor{position:absolute;left:1190px;top:111px;width:15px;height:15px}
.autofill{position:absolute;left:1273px;top:638px;width:20px;height:20px;background:#fff;border:1px solid #ababab;padding:2px}
.autofill svg{width:14px;height:14px}

/* tabs */
.sheettabs{height:28px;background:#e6e6e6;border-top:1px solid #9e9e9e;border-bottom:1px solid #c6c6c6;display:flex;align-items:flex-start;position:relative;flex:none;font-size:13.300px;color:#555;padding-top:2px}
.navs{width:100px;display:flex;padding:7px 0 0 27px;gap:24px;flex:none}
.st{height:20px;line-height:16px;margin-top:1px;padding:0 0 0 10px;border-left:1px solid #9e9e9e;white-space:nowrap;flex:none}
.s-a{width:63px}
.s-b{width:76px}
.s-c{width:65px;border-right:1px solid #9e9e9e}
.st.blue{background:#bdd7ee;color:#111;height:22px;width:111px;margin:0 0 0 1px;padding:0;border-left:0;text-align:center;line-height:18px}
.tsep{width:1px;height:20px;margin:1px 0 0 2px;background:#9e9e9e;flex:none}
.st.orange{background:#f4b183;color:#222;height:22px;width:58px;margin:0 0 0 2px;padding:0;border-left:0;text-align:center;line-height:18px}
.st.act{background:#fff;color:#217346;height:24px;width:117px;margin:-2px 0 0 2px;padding:0;border-left:0;border-right:1px solid #9e9e9e;border-bottom:2px solid #217346;text-align:center;line-height:22px}
.sn{width:69px;padding-left:11px}
.first-n{width:68px;border-left:0;padding-left:11px}
.last-n{border-right:1px solid #9e9e9e}
.addsheet{width:16px;height:16px;margin:3px 0 0 33px}
.tdots{width:16px;margin-left:30px;text-align:center;color:#999;line-height:20px}
.hscroll{position:absolute;left:1045px;top:6px;width:447px;height:15px;display:flex;background:#dcdcdc}
.sbtn.h{height:15px;width:15px}
.hthumb{width:265px;height:15px;background:#fff;border:1px solid #ababab;border-left:0}
.htrack{flex:1}

/* status */
.status{height:20px;background:#f1f1f1;display:flex;align-items:center;font-size:12px;color:#555;flex:none;white-space:nowrap;padding-right:16px}
.up1{margin-bottom:2px}
.s1{margin-left:7px}
.s2{margin-left:19px}
.s3{width:12px;height:13px;margin-left:17px}
.st-stat{margin-left:17px}
.sc{margin-left:auto}
.vw{width:38px;height:20px;display:flex;align-items:center;justify-content:center;flex:none}
.vw svg{width:14px;height:13px}
.vw.on{background:#c6c6c6;margin-left:21px}
.zm{position:relative;width:9px;height:2px;background:#666;flex:none}
.minus{margin-left:4px}
.plus{margin-left:4px}
.plus::after{content:"";position:absolute;left:3.500px;top:-3.500px;width:2px;height:9px;background:#666}
.slider{width:100px;height:1px;background:#aaa;margin-left:2px;position:relative;flex:none}
.slider i{position:absolute;left:43px;top:-5px;width:4px;height:11px;background:#666}
.slider b{position:absolute;left:50px;top:-2px;width:1px;height:5px;background:#aaa}
.pctz{margin-left:14px;width:25px;font-family:"Liberation Sans",sans-serif}

/* overlays */
.ime{position:absolute;left:727px;top:1010px;height:27px;display:flex;align-items:flex-start;z-index:5}
.ime-s{width:29px;height:27px;position:relative;z-index:2}
.ime-bar{width:197px;height:23px;margin:4px 0 0 0;background:#fff;border:1px solid #c5ddf0;border-left:0;border-bottom:0;display:flex;align-items:center;padding-left:10px;flex:none}
.ime-bar b{color:#0a72d6;font-size:14px;line-height:20px;width:14px;flex:none}
.ime-bar svg{height:15px}
.ime-bar .m1{width:12px;margin-left:12px}
.ime-bar .m2{width:14px;margin-left:11px}
.ime-bar .m3{width:15px;margin-left:10px}
.ime-bar .m4{width:15px;margin-left:9px}
.ime-bar .m5{width:17px;margin-left:7px}
.ime-bar .m6{width:13px;margin-left:9px}
.ime-bar .m7{width:14px;margin-left:11px}
.wm{position:absolute;left:1351px;top:985px;width:160px;height:52px;z-index:6}
.wm-swirl{position:absolute;left:0;top:3px;width:44px;height:40px}
.wm-t{position:absolute;left:43px;top:-1px;font-size:21px;line-height:28px;font-weight:700;color:#3d8ccb;opacity:.85;white-space:nowrap}
.wm-u{position:absolute;left:45px;top:25px;font:400 17px/22px "Liberation Sans",sans-serif;color:#4cc06a;opacity:.85;white-space:nowrap}
.arrow{position:absolute;z-index:7;overflow:visible}
.a-one{left:419px;top:100px;width:40px;height:70px}
.a-two{left:1179px;top:160px;width:40px;height:90px}
```
